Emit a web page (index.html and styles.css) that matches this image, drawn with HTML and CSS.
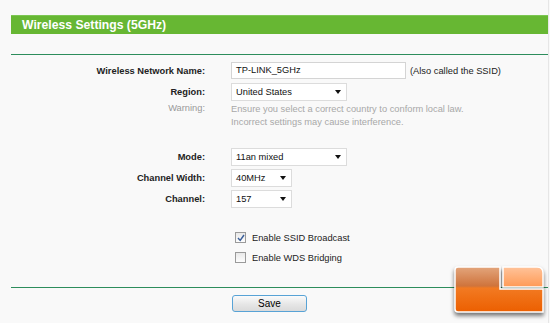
FILE: index.html
```html
<!DOCTYPE html>
<html>
  <head>
    <meta charset="UTF-8" />
    <title>Wireless Settings (5GHz)</title>
    <link rel="stylesheet" href="styles.css">
  </head>
  <body>
    <main class="page">
      <div class="title-bar">Wireless Settings (5GHz)</div>
      <div class="rule"></div>

      <div class="form">
        <div class="row">
          <div class="label">Wireless Network Name:</div>
          <div class="field">
            <div class="text-input">TP-LINK_5GHz</div>
            <span class="hint">(Also called the SSID)</span>
          </div>
        </div>
        <div class="row">
          <div class="label">Region:</div>
          <div class="field">
            <div class="select wide">United States <span class="arrow"></span></div>
          </div>
        </div>
        <div class="row warning">
          <div class="label muted">Warning:</div>
          <div class="note">Ensure you select a correct country to conform local law.<br>Incorrect settings may cause interference.</div>
        </div>

        <div class="row mode">
          <div class="label">Mode:</div>
          <div class="field">
            <div class="select wide">11an mixed <span class="arrow"></span></div>
          </div>
        </div>
        <div class="row">
          <div class="label">Channel Width:</div>
          <div class="field">
            <div class="select small">40MHz <span class="arrow"></span></div>
          </div>
        </div>
        <div class="row">
          <div class="label">Channel:</div>
          <div class="field">
            <div class="select small">157 <span class="arrow"></span></div>
          </div>
        </div>

        <div class="checks">
          <label class="check">
            <span class="box">
              <svg width="8" height="8" viewBox="0 0 8 8"><path d="M1 4 L3.2 6.4 L7 1" fill="none" stroke="#3b5f9a" stroke-width="1.5"/></svg>
            </span>
            Enable SSID Broadcast
          </label>
          <label class="check">
            <span class="box"></span>
            Enable WDS Bridging
          </label>
        </div>
      </div>

      <div class="rule bottom"></div>
      <div class="actions">
        <button class="save">Save</button>
      </div>
    </main>

    <svg class="watermark" width="100" height="58" viewBox="0 0 100 58">
      <defs>
        <linearGradient id="lrTop" x1="0" y1="0" x2="0" y2="1">
          <stop offset="0" stop-color="#e3a57c" />
          <stop offset="0.42" stop-color="#cf743c" />
          <stop offset="0.47" stop-color="#f27a22" />
          <stop offset="1" stop-color="#ec5f00" />
        </linearGradient>
        <linearGradient id="lrRight" x1="0" y1="0" x2="0" y2="1">
          <stop offset="0" stop-color="#ffc39a" />
          <stop offset="1" stop-color="#ff9a55" />
        </linearGradient>
      </defs>
      <path d="M5,8 Q5,5 8,5 H50 V27 H93 V50 H8 Q5,50 5,47 Z" fill="url(#lrTop)" stroke="#fff" stroke-width="1.5" />
      <path d="M53,5 H87 Q93,5 93,11 V25 H53 Z" fill="url(#lrRight)" stroke="#fff" stroke-width="1.5" />
    </svg>
  </body>
</html>
```

FILE: styles.css
```css
* {
  box-sizing: border-box;
}
body {
  margin: 0;
  background-color: #f9f9f9;
  font-family: "Liberation Sans", Arial, sans-serif;
  font-size: 9.3px;
  color: #111;
}
.page {
  width: 549px;
  height: 323px;
  padding: 15px 0 0 11px;
  border-right: 1px solid #e6e6e6;
}
.title-bar {
  height: 19px;
  line-height: 19px;
  padding-left: 11px;
  background-color: #67b733;
  border-top: 1px solid #7cc652;
  color: #fff;
  font-weight: bold;
  font-size: 12.2px;
}
.rule {
  height: 1px;
  margin-top: 20px;
  background-color: #2d8d5c;
}
.form {
  padding-top: 7px;
}
.row {
  display: grid;
  grid-template-columns: 194px 1fr;
  column-gap: 26px;
  align-items: center;
  margin-bottom: 4px;
}
.label {
  text-align: right;
  font-weight: bold;
  color: #222;
}
.label.muted {
  font-weight: normal;
  color: #9a9a9a;
  align-self: start;
}
.field {
  display: flex;
  align-items: center;
}
.text-input {
  width: 175px;
  height: 17px;
  line-height: 15px;
  padding-left: 4px;
  background-color: #fff;
  border: 1px solid #d4d4d4;
}
.hint {
  margin-left: 4px;
  color: #222;
}
.select {
  display: flex;
  align-items: center;
  justify-content: space-between;
  height: 18px;
  padding: 0 5px 0 4px;
  background-color: #fff;
  border: 1px solid #dcdcdc;
}
.select.wide {
  width: 116px;
}
.select.small {
  width: 61px;
}
.arrow {
  width: 0;
  height: 0;
  border-left: 3.5px solid transparent;
  border-right: 3.5px solid transparent;
  border-top: 4px solid #111;
}
.warning {
  margin-top: -2px;
}
.note {
  color: #a8a8a8;
  line-height: 13px;
}
.mode {
  margin-top: 19px;
}
.row.mode,
.row.mode ~ .row {
  margin-bottom: 3px;
}
.checks {
  display: flex;
  flex-direction: column;
  gap: 9px;
  padding: 21px 0 0 224px;
}
.check {
  display: flex;
  align-items: center;
  height: 11px;
  color: #222;
}
.box {
  display: flex;
  align-items: center;
  justify-content: center;
  width: 11px;
  height: 11px;
  margin-right: 6px;
  background: linear-gradient(#e9e9e9, #fdfdfd);
  border: 1px solid #9a9a9a;
}
.rule.bottom {
  margin-top: 24px;
}
.actions {
  padding: 7px 0 0 221px;
}
.save {
  width: 75px;
  height: 17px;
  padding: 0;
  font-family: "Liberation Sans", Arial, sans-serif;
  font-size: 10px;
  color: #000;
  background: linear-gradient(#fbfbfb, #e6e6e6 55%, #dadada);
  border: 1px solid #58a3d6;
  border-radius: 3px;
}
.watermark {
  position: absolute;
  left: 450px;
  top: 262px;
  filter: drop-shadow(0 3px 2px rgba(0, 0, 0, 0.55));
}
```
